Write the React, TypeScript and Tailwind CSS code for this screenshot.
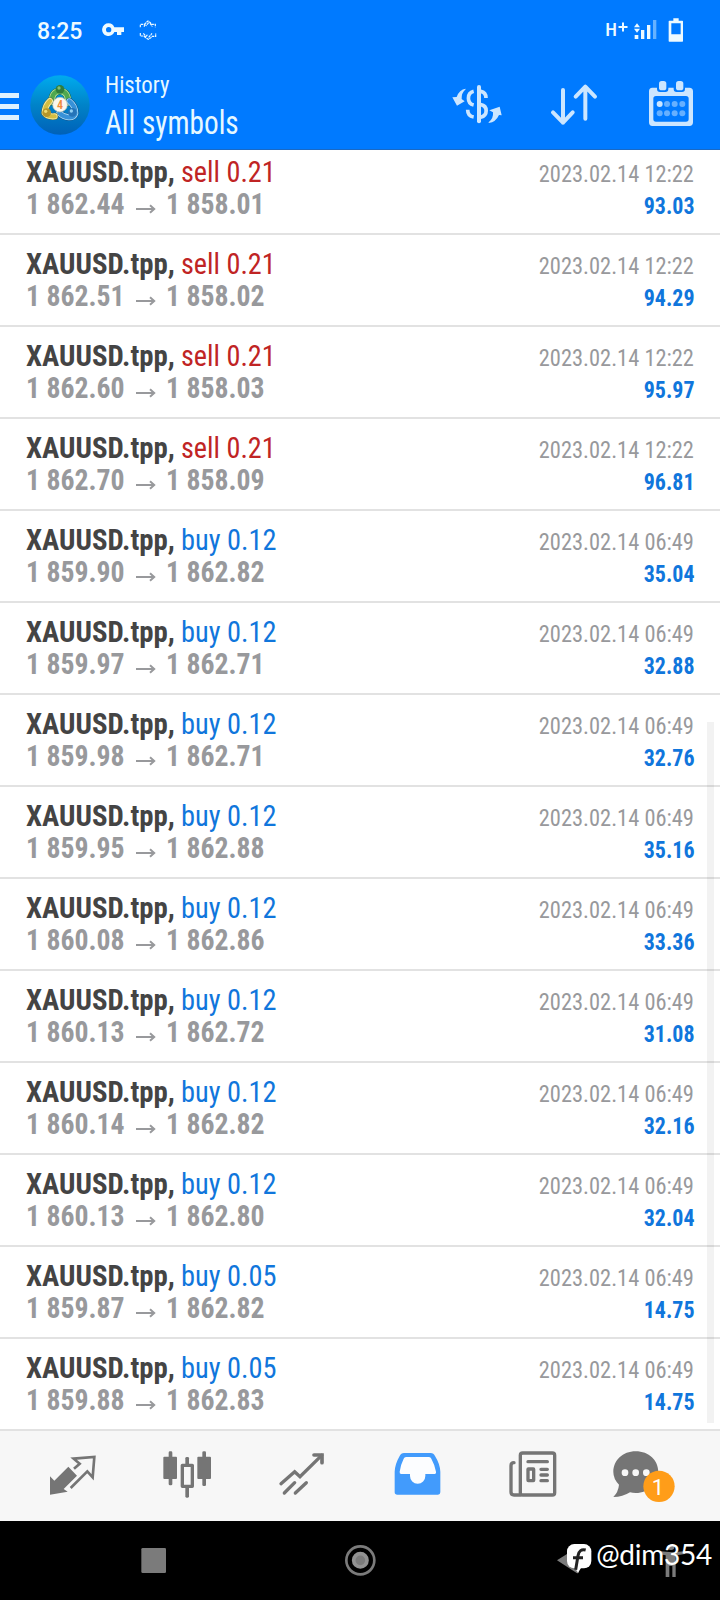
import React from 'react';

type Deal = {
    side: 'sell' | 'buy';
    volume: string;
    open: string;
    close: string;
    time: string;
    profit: string;
};

const sell = (open: string, close: string, profit: string): Deal => ({
    side: 'sell',
    volume: '0.21',
    open,
    close,
    time: '2023.02.14 12:22',
    profit,
});

const buy = (volume: string, open: string, close: string, profit: string): Deal => ({
    side: 'buy',
    volume,
    open,
    close,
    time: '2023.02.14 06:49',
    profit,
});

const deals: Deal[] = [
    sell('1 862.44', '1 858.01', '93.03'),
    sell('1 862.51', '1 858.02', '94.29'),
    sell('1 862.60', '1 858.03', '95.97'),
    sell('1 862.70', '1 858.09', '96.81'),
    buy('0.12', '1 859.90', '1 862.82', '35.04'),
    buy('0.12', '1 859.97', '1 862.71', '32.88'),
    buy('0.12', '1 859.98', '1 862.71', '32.76'),
    buy('0.12', '1 859.95', '1 862.88', '35.16'),
    buy('0.12', '1 860.08', '1 862.86', '33.36'),
    buy('0.12', '1 860.13', '1 862.72', '31.08'),
    buy('0.12', '1 860.14', '1 862.82', '32.16'),
    buy('0.12', '1 860.13', '1 862.80', '32.04'),
    buy('0.05', '1 859.87', '1 862.82', '14.75'),
    buy('0.05', '1 859.88', '1 862.83', '14.75'),
];

export default function App(): React.JSX.Element {
    return (
        <div className="relative flex flex-col w-[720px] h-[1600px] overflow-hidden bg-white font-['Roboto_Condensed','Roboto',sans-serif] font-stretch-75%">
            <StatusBar />
            <Header />
            <DealList />
            <TabBar />
            <SystemNav />
            <Watermark />
        </div>
    );
}

function StatusBar(): React.JSX.Element {
    return (
        <div className="flex h-[60px] shrink-0 items-center bg-[#007aff] pl-[37px] pr-[36px] text-[#eefaff]">
            <span className="w-[65px] pt-[3px] text-[23px] leading-7 font-medium font-['Roboto'] font-stretch-100%">
                8:25
            </span>
            <svg className="w-[22px] h-[20px]" viewBox="305 60 66 60" fill="currentColor">
                <path
                    fillRule="evenodd"
                    d="M325 70a19 19 0 1 0 17 26h8v9h13v-9h8V82h-29a19 19 0 0 0-17-12zm0 11a8 8 0 1 1 0 16 8 8 0 0 1 0-16z"
                />
            </svg>
            <svg
                className="ml-[15px] w-[18px] h-[20px]"
                viewBox="417 58 54 60"
                fill="none"
                stroke="currentColor"
                strokeWidth="3.5"
                strokeDasharray="8 2"
            >
                <path d="M421 80v-9h12l5-5 6-5 7 5 3 5h12v9M432 78l6-10M446 66l-8 10M450 68l7 10M421 97v9h11l5 5 8 5 8-5 3-4h11v-9M430 98l8 9 6-6M446 110l10-12" />
            </svg>
            <div className="ml-auto flex h-[24px] items-start">
                <span className="text-[19px] leading-[24px] font-['Roboto'] font-stretch-75% font-medium">H</span>
                <svg className="mt-[4px] ml-[1px] w-[10px] h-[10px]" viewBox="0 0 10 10" stroke="currentColor" strokeWidth="2">
                    <path d="M.5 5h9M5 .5v9" />
                </svg>
                <svg className="ml-[6px] mt-[1px] w-[23px] h-[22px]" viewBox="612 57 69 66" fill="currentColor">
                    <path d="M621 70l9 12h-18zM612 86h18l-9 12zM614 105h11v12h-11zM633 90h10v27h-10zM651 75h10v42h-10z" />
                    <path d="M669 60h10v57h-10z" fill="#66b2ff" />
                </svg>
                <svg className="ml-[11px] w-[16px] h-[24px]" viewBox="713 52 48 72" fill="currentColor">
                    <path
                        fillRule="evenodd"
                        d="M729 53h16v7h11q2 0 2 2v59q0 2-2 2h-39q-2 0-2-2V62q0-2 2-2h12zM723 68v33h28V68z"
                    />
                </svg>
            </div>
        </div>
    );
}

function Header(): React.JSX.Element {
    return (
        <div className="flex h-[90px] shrink-0 items-start border-b border-[#1a69c4] bg-[#007aff] text-[#e6f8ff]">
            <div className="mt-[33px] flex w-[19px] flex-col gap-[6px]">
                <div className="h-[5px] bg-[#def2ff]" />
                <div className="h-[5px] bg-[#def2ff]" />
                <div className="h-[5px] bg-[#def2ff]" />
            </div>
            <AppLogo />
            <div className="ml-[15px] flex flex-col">
                <span className="mt-[9px] origin-left scale-x-[0.95] text-[24px] leading-[32px]">History</span>
                <span className="mt-[4px] origin-left scale-x-[0.9] text-[32.5px] leading-[36px]">
                    All symbols
                </span>
            </div>
            <div className="ml-auto mt-[20px] flex text-[#cce6ff]">
                <svg className="mr-[45px] w-[54px] h-[48px]" viewBox="60 240 162 144" fill="none" stroke="currentColor" strokeWidth="11">
                    <path d="M147 261v103" strokeWidth="12" strokeLinecap="round" />
                    <path d="M131 274c-21 5-21 36 0 41M113 329c0 14 7 20 18 22M152 274q16 3 16 20M152 314c22 4 22 32 0 38" />
                    <path
                        d="M107 266q-19 2-27 25l-13 1 14 25 23-13-9-7q-1-18 12-29zM176 369q22-3 31-24l8 1-6-26-31 11 11 6q2 18-13 30z"
                        fill="currentColor"
                        stroke="none"
                    />
                </svg>
                <svg
                    className="mr-[49px] w-[50px] h-[48px]"
                    viewBox="357 240 150 144"
                    fill="none"
                    stroke="currentColor"
                    strokeWidth="12"
                    strokeLinecap="round"
                    strokeLinejoin="round"
                >
                    <path d="M399 270v98M369 337l30 31 29-31M466 356v-96M437 290l29-30 29 30" />
                </svg>
                <svg className="mr-[26px] w-[46px] h-[48px]" viewBox="654 240 138 144" fill="currentColor">
                    <path
                        fillRule="evenodd"
                        d="M667 263h14v4q0 9 9 9h16q9 0 9-9v-4h16v4q0 9 9 9h16q9 0 9-9v-4h13q11 0 11 11v93q0 11-11 11H667q-10 0-10-11v-93q0-11 10-11zM678 288q-8 0-8 8v61q0 8 8 8h90q8 0 8-8v-61q0-8-8-8z"
                    />
                    <rect x="687" y="243" width="22" height="28" rx="8" />
                    <rect x="738" y="243" width="22" height="28" rx="8" />
                    <circle cx="689" cy="312" r="9" />
                    <g fill="#66b0ff">
                        <circle cx="711" cy="312" r="9" />
                        <circle cx="734" cy="312" r="9" />
                        <circle cx="757" cy="312" r="9" />
                        <circle cx="689" cy="340" r="9" />
                        <circle cx="711" cy="340" r="9" />
                        <circle cx="734" cy="340" r="9" />
                        <circle cx="757" cy="340" r="9" />
                    </g>
                </svg>
            </div>
        </div>
    );
}

function AppLogo(): React.JSX.Element {
    return (
        <svg className="ml-[11px] mt-[15px] w-[60px] h-[60px]" viewBox="6 9 180 180">
            <defs>
                <linearGradient id="sky" x1="0" y1="0" x2="0" y2="1">
                    <stop offset="0" stopColor="#00abee" />
                    <stop offset="0.5" stopColor="#0083c8" />
                    <stop offset="1" stopColor="#0061b8" />
                </linearGradient>
            </defs>
            <circle cx="96" cy="99" r="89" fill="url(#sky)" />
            <g fill="none" strokeLinecap="round" strokeLinejoin="round">
                <path d="M72 90q-2-30 24-34 26 4 24 36" stroke="#1d6b45" strokeWidth="21" />
                <path d="M72 90q-2-30 24-34 26 4 24 36" stroke="#b5e09a" strokeWidth="18" />
                <path d="M72 90q-2-30 24-34 26 4 24 36" stroke="#4fa850" strokeWidth="13" />
                <path d="M124 88q18 14 18 36-4 13-20 12-16-1-28-13" stroke="#12518c" strokeWidth="21" />
                <path d="M124 88q18 14 18 36-4 13-20 12-16-1-28-13" stroke="#a9dcf8" strokeWidth="18" />
                <path d="M124 88q18 14 18 36-4 13-20 12-16-1-28-13" stroke="#3791d8" strokeWidth="13" />
                <path d="M66 87q-15 14-16 36 9 12 30 10" stroke="#5c6c3c" strokeWidth="21" />
                <path d="M66 87q-15 14-16 36 9 12 30 10" stroke="#f4ecaa" strokeWidth="18" />
                <path d="M66 87q-15 14-16 36 9 12 30 10" stroke="#d3bd42" strokeWidth="13" />
            </g>
            <circle cx="96" cy="52" r="13" fill="#2f7d3c" />
            <circle cx="93" cy="48" r="5" fill="#83bf74" />
            <circle cx="56" cy="122" r="13" fill="#b5962a" />
            <circle cx="53" cy="118" r="5" fill="#f0dc70" />
            <circle cx="133" cy="121" r="13" fill="#2574b8" />
            <circle cx="130" cy="117" r="5" fill="#8fd0f5" />
            <circle cx="96" cy="98" r="22" fill="#fbf7ee" stroke="#b9c3b4" strokeWidth="2" />
            <text x="96" y="111" textAnchor="middle" className="text-[36px] font-semibold font-['Roboto']" fill="#f08a3c">
                4
            </text>
        </svg>
    );
}

function DealList(): React.JSX.Element {
    return (
        <div className="relative h-[1281px] shrink-0 overflow-hidden">
            <div className="-mt-[7px] flex flex-col">
                {deals.map((deal, i) => (
                    <DealRow key={i} deal={deal} />
                ))}
            </div>
            <div className="absolute top-[572px] right-[6px] h-[701px] w-[7px] bg-black/5" />
        </div>
    );
}

function DealRow(props: { deal: Deal }): React.JSX.Element {
    const { deal } = props;
    return (
        <div className="flex h-[92px] shrink-0 justify-between border-b-2 border-[#e2e2e2] px-[26px] whitespace-nowrap">
            <div className="flex flex-col pt-[13px] text-[30px] leading-[32px]">
                <div className="flex">
                    <span className="w-[155px] origin-left scale-x-[0.96] font-bold text-[#444444]">XAUUSD.tpp,</span>
                    <span
                        className={
                            deal.side === 'sell'
                                ? 'origin-left scale-x-[0.94] text-[#c02424]'
                                : 'origin-left scale-x-[0.945] text-[#1076dc]'
                        }
                    >
                        {deal.side} {deal.volume}
                    </span>
                </div>
                <div className="flex font-bold text-[#98999c]">
                    <span className="w-[110px] origin-left scale-x-[0.925]">{deal.open}</span>
                    <svg
                        className="mt-[15.5px] w-[20px] h-[10px]"
                        viewBox="0 0 20 10"
                        fill="none"
                        stroke="currentColor"
                        strokeWidth="2"
                    >
                        <path d="M0 5h18M14 1.2L18.2 5 14 8.8" />
                    </svg>
                    <span className="ml-[10px] origin-left scale-x-[0.925]">{deal.close}</span>
                </div>
            </div>
            <div className="flex flex-col items-end pt-[15px] text-[24px] leading-[32px]">
                <span className="origin-right scale-x-[0.935] text-[#98999c]">{deal.time}</span>
                <span className="origin-right scale-x-[0.915] font-bold text-[#1076dc]">{deal.profit}</span>
            </div>
        </div>
    );
}

const tabIcon = 'w-[52px] h-[60px] overflow-visible';

function TabBar(): React.JSX.Element {
    return (
        <div className="grid h-[90px] shrink-0 grid-cols-6 items-start justify-items-center bg-[#f7f7f7] px-[14px] pt-[17px] text-[#757575]">
            <svg className={tabIcon} viewBox="138 84 156 180" fill="none">
                <path d="M150 169l13 13 42-42 26 27-40 40 12 8-53 9z" fill="currentColor" />
                <path d="M222 146l17-15-18-15 62-5-5 61-16-18-50 50" stroke="currentColor" strokeWidth="8" />
            </svg>
            <svg className={tabIcon} viewBox="484 84 156 180" fill="currentColor">
                <rect x="491" y="110" width="41" height="67" rx="3" />
                <rect x="507" y="94" width="11" height="102" rx="4" />
                <rect x="593" y="110" width="41" height="67" rx="3" />
                <rect x="608" y="94" width="11" height="104" rx="4" />
                <rect x="557" y="111" width="11" height="122" rx="4" />
                <rect x="548" y="136" width="30" height="63" fill="#f7f7f7" stroke="currentColor" strokeWidth="10" strokeLinejoin="round" />
            </svg>
            <svg className={tabIcon} viewBox="110 84 156 180" fill="none" stroke="currentColor" strokeWidth="10" strokeLinecap="round">
                <path d="M125 191l41-36 16 15 65-64M135 219l31-31M168 219l33-31" />
                <path d="M224 105h24v23" strokeWidth="11" />
            </svg>
            <svg className={tabIcon} viewBox="456 84 156 180">
                <path
                    d="M492 99h80q9 0 13 9 15 24 16 47v62q0 7-7 7H472q-8 0-8-7v-62q1-23 15-47 4-9 13-9z"
                    fill="#429bfc"
                />
                <path
                    d="M498 111h69q5 0 7 5 11 20 14 39 1 7-6 7h-26v6a22 22 0 0 1-46 0v-6h-26q-6 0-5-7 2-19 12-39 2-5 7-5z"
                    fill="#fcfdff"
                />
            </svg>
            <svg className={tabIcon} viewBox="82 84 156 180" fill="none" stroke="currentColor" strokeWidth="10" strokeLinecap="round">
                <rect x="122" y="99" width="103" height="126" rx="7" />
                <path d="M103 128q-9 0-9 9v79q0 9 9 9h19" />
                <path d="M145 125h58M184 148h19M184 165h19M184 182h19" />
                <rect x="145" y="147" width="17" height="35" rx="1" />
            </svg>
            <svg className={tabIcon} viewBox="427 84 156 180">
                <path
                    d="M468 94c40 0 68 27 68 62s-28 63-68 63q-9 0-17-2-22 14-50 14 15-15 17-37-17-17-17-38c0-35 28-62 67-62z"
                    fill="currentColor"
                />
                <circle cx="436" cy="158" r="10" fill="#f7f7f7" />
                <circle cx="468" cy="158" r="10" fill="#f7f7f7" />
                <circle cx="500" cy="158" r="10" fill="#f7f7f7" />
                <circle cx="538" cy="199" r="47" fill="#ff9d19" />
                <text x="535" y="224" textAnchor="middle" className="text-[66px] font-['Roboto'] font-normal font-stretch-100%" fill="#ffffff">
                    1
                </text>
            </svg>
        </div>
    );
}

function SystemNav(): React.JSX.Element {
    return (
        <div className="flex h-[79px] shrink-0 items-start bg-black pt-[22px] text-[#7b7b7b]">
            <svg className="ml-[137px] w-[32px] h-[34px]" viewBox="411 369 96 102" fill="currentColor">
                <rect x="424" y="384" width="74" height="75" rx="4" />
            </svg>
            <svg className="ml-[175px] w-[32px] h-[34px]" viewBox="312 369 96 102" fill="none" stroke="currentColor" strokeWidth="8">
                <circle cx="361" cy="421" r="42" />
                <circle cx="361" cy="421" r="20" fill="#7b7b7b" stroke="#929292" strokeWidth="11" />
            </svg>
            <svg className="ml-[178px] w-[26px] h-[34px]" viewBox="222 369 78 102" fill="currentColor">
                <path d="M231 421l59-37q6-3 6 3v68q0 7-6 4z" />
            </svg>
            <svg className="ml-[80px] w-[26px] h-[36px]" viewBox="540 369 78 108" fill="currentColor">
                <ellipse cx="573" cy="382" rx="10" ry="8" />
                <path d="M540 394q37 5 74 0v8q-13 3-27 4v65h-10v-33h-9v33h-11v-65q-9-1-17-4z" />
            </svg>
        </div>
    );
}

function Watermark(): React.JSX.Element {
    return (
        <div className="absolute right-[8px] bottom-[27px] flex items-start text-white">
            <svg className="mt-[4px] w-[25px] h-[30px]" viewBox="263 369 75 90">
                <rect x="263" y="372" width="73" height="73" rx="22" fill="#ffffff" />
                <path d="M287 444h18l-9 14z" fill="#ffffff" />
                <path
                    d="M319 390q-19-5-23 17l-7 42M281 413h30"
                    fill="none"
                    stroke="#222222"
                    strokeWidth="9"
                />
            </svg>
            <span className="ml-[4px] text-[28px] leading-[30px] tracking-[-0.25px] font-['Lato'] font-stretch-100%">
                @dim354
            </span>
        </div>
    );
}
